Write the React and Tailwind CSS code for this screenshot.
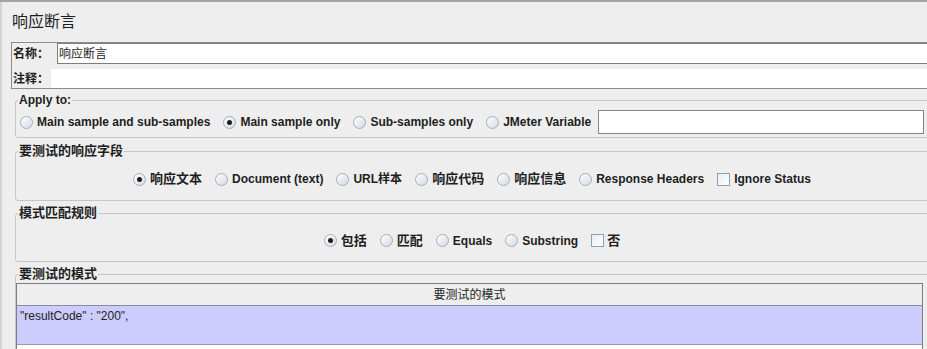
import React from 'react';

const Radio = ({ checked }) => (
  <span className="w-[13px] h-[13px] rounded-full border border-[#a4adb8] bg-linear-to-br from-white to-[#d3dae3] flex items-center justify-center shrink-0">
    {checked && <span className="w-[5px] h-[5px] rounded-full bg-[#1c1c1c]" />}
  </span>
);

const Check = () => (
  <span className="w-[13px] h-[13px] border border-[#8aa0b8] bg-linear-to-br from-[#e8edf3] to-white shrink-0" />
);

const Option = ({ label, checked, box, cjk }) => (
  <label className="flex items-center gap-[4px] whitespace-nowrap">
    {box ? <Check /> : <Radio checked={checked} />}
    <span className={`font-bold text-[#1e1e1e] ${cjk ? 'text-[13px]' : 'text-[12px]'}`}>{label}</span>
  </label>
);

const Group = ({ title, cjk, className = '', children }) => (
  <fieldset className={`ml-[13px] w-[922px] border border-[#c6c6c6] rounded-[3px] ${className}`}>
    <legend className={`ml-[2px] px-[1px] font-bold leading-[14px] text-[#1e1e1e] ${cjk ? 'text-[13px]' : 'text-[12px]'}`}>
      {title}
    </legend>
    {children}
  </fieldset>
);

const App = () => {
  const fields = [
    { label: '响应文本', checked: true, cjk: true },
    { label: 'Document (text)' },
    { label: 'URL样本' },
    { label: '响应代码', cjk: true },
    { label: '响应信息', cjk: true },
    { label: 'Response Headers' },
  ];

  const rules = [
    { label: '包括', checked: true, cjk: true },
    { label: '匹配', cjk: true },
    { label: 'Equals' },
    { label: 'Substring' },
  ];

  return (
    <div
      className="w-[927px] h-[349px] overflow-hidden bg-[#eeeeee] border-t-2 border-[#a3a3a3] text-[#1e1e1e]"
      style={{ fontFamily: '"Liberation Sans", "Noto Sans CJK SC", sans-serif' }}
    >
      <div className="h-full border-l-2 border-[#d4d4d4]">
        <div className="h-[40px] pl-[10px] flex items-center">
          <h1 className="text-[16px] font-normal leading-none">响应断言</h1>
        </div>

        <div className="ml-[9px] w-[930px] border border-[#8b8b8b]">
          <div className="flex h-[21px] items-center">
            <span className="w-[45px] shrink-0 pl-[1px] text-[12px] font-bold whitespace-nowrap">名称：</span>
            <div className="flex-1 h-full border border-[#7d7d7d] bg-white pl-[1px] flex items-center text-[12px]">
              响应断言
            </div>
          </div>
          <div className="flex h-[19px] mt-[5px] items-center">
            <span className="w-[39px] shrink-0 pl-[1px] text-[12px] font-bold whitespace-nowrap">注释：</span>
            <div className="flex-1 h-full bg-white" />
          </div>
        </div>

        <Group title="Apply to:" className="mt-[4px]">
          <div className="flex items-center gap-[13px] pl-[4px] pr-[12px] pt-[3px] pb-[3px]">
            <Option label="Main sample and sub-samples" />
            <Option label="Main sample only" checked />
            <Option label="Sub-samples only" />
            <Option label="JMeter Variable" />
            <div className="flex-1 -ml-[6px] h-[24px] border border-[#858585] bg-white" />
          </div>
        </Group>

        <Group title="要测试的响应字段" cjk className="mt-[6px]">
          <div className="h-[42px] flex items-center justify-center gap-[13px] pr-[8px]">
            {fields.map((f) => (
              <Option key={f.label} {...f} />
            ))}
            <Option label="Ignore Status" box />
          </div>
        </Group>

        <Group title="模式匹配规则" cjk className="mt-[5px]">
          <div className="h-[41px] flex items-center justify-center gap-[13px] pr-[8px]">
            {rules.map((r) => (
              <Option key={r.label} {...r} />
            ))}
            <label className="flex items-center gap-[3px]">
              <Check />
              <span className="text-[13px] font-bold">否</span>
            </label>
          </div>
        </Group>

        <Group title="要测试的模式" cjk className="mt-[5px]">
          <div className="mt-[2px] w-[907px] border border-[#7c7c84] bg-white">
            <div className="h-[22px] bg-[#eeeeee] border-b border-[#8a8aa2] flex items-center justify-center text-[12px]">
              要测试的模式
            </div>
            <div className="h-[39px] bg-[#ccccff] border-b border-[#9a9aaa] pl-[3px] pt-[3px] text-[12px] leading-[14px]">
              "resultCode" : "200",
            </div>
            <div className="h-[20px] bg-white" />
          </div>
        </Group>
      </div>
    </div>
  );
};

export default App;
